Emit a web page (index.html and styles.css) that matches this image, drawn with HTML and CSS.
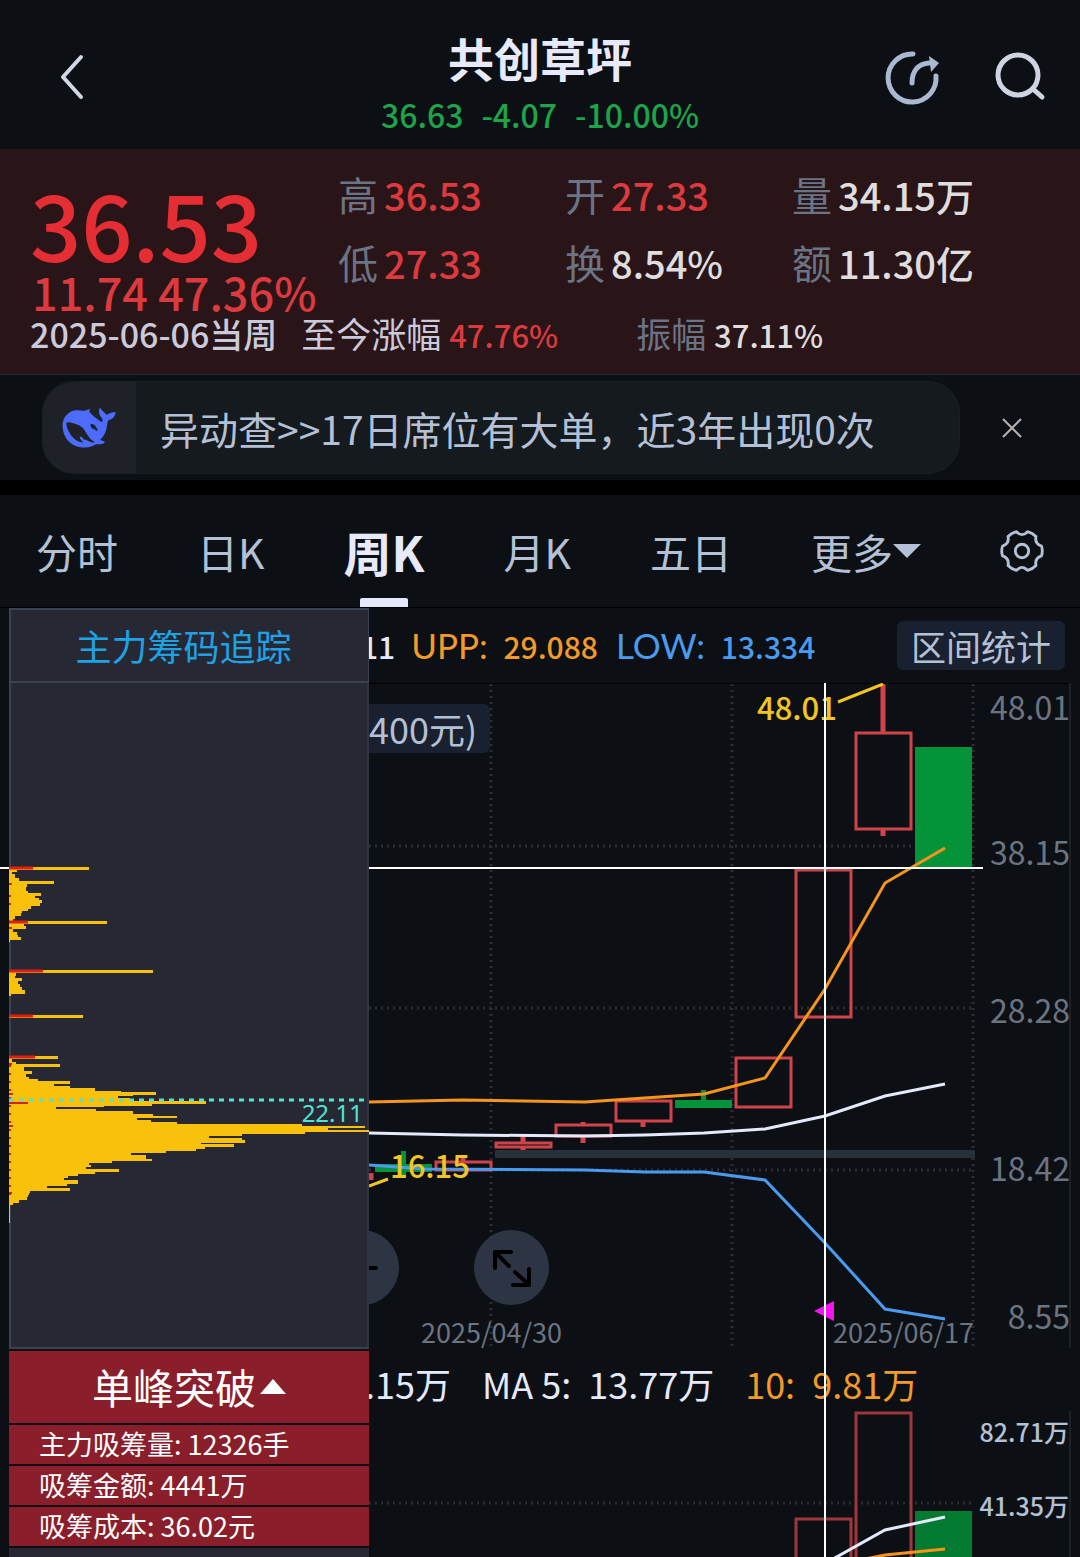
FILE: index.html
```html
<!DOCTYPE html>
<html lang="zh-CN">
<head>
    <meta charset="UTF-8">
    <meta name="viewport" content="width=device-width, initial-scale=1.0">
    <title>共创草坪 周K</title>
    <link rel="stylesheet" href="styles.css">
</head>
<body>
<header class="topbar">
    <button class="icon-btn back" aria-label="返回">
        <svg width="48" height="56" viewBox="0 0 48 56"><path d="M33 8 15 28l18 20" fill="none" stroke="#d3d6e4" stroke-width="4" stroke-linecap="round" stroke-linejoin="round"/></svg>
    </button>
    <div class="stock">
        <h1>共创草坪</h1>
        <p class="stock-change"><span>36.63</span><span>-4.07</span><span>-10.00%</span></p>
    </div>
    <div class="actions">
        <button class="icon-btn" aria-label="分享">
            <svg width="56" height="56" viewBox="0 0 56 56" fill="none" stroke="#a9b9d2" stroke-width="5" stroke-linecap="round"><path d="M29 5A24 24 0 1 0 52 27"/><path d="M28 34C28 22 34 15 45 14"/><path d="M45 7l10 7-8 9z" fill="#a9b9d2" stroke="none"/></svg>
        </button>
        <button class="icon-btn" aria-label="搜索">
            <svg width="56" height="56" viewBox="0 0 56 56" fill="none" stroke="#d0d3e2" stroke-width="5" stroke-linecap="round"><circle cx="26" cy="26" r="20"/><path d="M41 40l9 8"/></svg>
        </button>
    </div>
</header>

<section class="quote">
    <div class="quote-main">
        <div class="price-block">
            <p class="price">36.53</p>
            <p class="price-change">11.74 47.36%</p>
        </div>
        <dl class="stats">
            <div><dt>高</dt><dd class="up">36.53</dd></div>
            <div><dt>开</dt><dd class="up">27.33</dd></div>
            <div><dt>量</dt><dd>34.15万</dd></div>
            <div><dt>低</dt><dd class="up">27.33</dd></div>
            <div><dt>换</dt><dd>8.54%</dd></div>
            <div><dt>额</dt><dd>11.30亿</dd></div>
        </dl>
    </div>
    <div class="period">
        <span class="date">2025-06-06当周</span>
        <span class="since">至今涨幅 <b class="up">47.76%</b></span>
        <span class="range">振幅 <b>37.11%</b></span>
    </div>
</section>

<section class="notice">
    <a class="notice-link" href="#notice">
        <span class="notice-icon">
            <svg width="55" height="41" viewBox="70 82 165 123"><path fill="#4d6bfe" fill-rule="evenodd" d="M155 88C148 90 140 92 134 94 122 91 108 91 96 96 78 106 70 124 72 144 75 172 92 196 122 202 145 206 160 202 172 194 180 194 192 194 198 189 198 184 190 183 184 181 196 170 203 155 205 138 206 130 207 124 210 121 222 119 230 110 231 97 222 98 212 100 204 106 198 98 190 92 184 84 178 94 181 106 190 116 192 120 192 124 190 128 176 120 160 106 153 98 151 95 153 91 155 88ZM84 128C100 128 118 134 132 144 142 156 150 176 164 184L168 188C158 190 150 184 142 180 138 182 134 178 130 172 126 170 122 172 124 176 126 182 132 186 134 188 118 188 104 178 94 162 86 150 82 138 84 128ZM156 134q10-4 20 14 2 6-2 6-6-2-8-8-2 4-4 2-8-6-6-14Z"/></svg>
        </span>
        <span class="notice-text">异动查&gt;&gt;17日席位有大单，近3年出现0次</span>
    </a>
    <button class="icon-btn close" aria-label="关闭">
        <svg width="24" height="24" viewBox="0 0 24 24"><path d="M3 3l18 18M21 3 3 21" stroke="#b5b0ad" stroke-width="2"/></svg>
    </button>
</section>

<nav class="tabs">
    <button>分时</button>
    <button>日K</button>
    <button class="active">周K</button>
    <button>月K</button>
    <button>五日</button>
    <button>更多<svg width="28" height="16" viewBox="0 0 28 16"><path d="M0 1h28L14 15z" fill="#b4c0d6"/></svg></button>
    <button aria-label="设置">
        <svg width="44" height="44" viewBox="1 1 46 46" fill="none" stroke="#b4c0d6" stroke-width="3" stroke-linejoin="round"><path d="M44.4 18.9Q46 24 44.4 29.1 37 31.5 38.6 39.1 35 43 29.8 44.2 24 38 18.2 44.2 13 43 9.4 39.1 11 31.5 3.6 29.1 2 24 3.6 18.9 11 16.5 9.4 8.9 13 5 18.2 3.8 24 10 29.8 3.8 35 5 38.6 8.9 37 16.5 44.4 18.9Z"/><circle cx="24" cy="24" r="7"/></svg>
    </button>
</nav>

<main class="board">
    <aside class="chips">
        <h2>主力筹码追踪</h2>
        <svg class="chips-plot" viewBox="9 683 360 666">
            <path d="M10 683V1348H369" fill="none" stroke="#3a4150" stroke-width="2"/>
            <path d="M368 683V1348" stroke="#3a4150"/>
            <path d="M0 868H9" stroke="#fff" stroke-width="2"/>
            <!-- yellow: holdings by price -->
            <g fill="#f9c20a">
                <path d="M9 867H89V870H17V872H12V874H15V878H19V881H54V884H27V887H26V891H28V893H41V896H35V898H39V900H42V903H40V906H31V909H28V911H22V913H21V916H15V919H13V921H107V924H24V926H26V929H13V932H17V935H18V937H21V940H10V942H9Z"/>
                <path d="M9 970H153V973H16V976H15V978H22V981H18V984H20V987H22V990H25V994H11V996H9Z"/>
                <path d="M9 1015H83V1018H9Z"/>
                <path d="M9 1056H58V1059H12V1062H16V1064H60V1067H24V1071H32V1074H26V1077H29V1079H38V1081H70V1084H54V1086H70V1088H95V1091H121V1092H156V1095H133V1096H118V1098H130V1101H206V1104H152V1106H104V1107H56V1109H96V1111H133V1114H153V1116H177V1118H137V1120H151V1122H177V1124H302V1126H365V1128H328V1130H369V1132H305V1134H242V1136H209V1138H242V1140H245V1143H201V1144H234V1147H205V1149H196V1151H166V1153H131V1155H146V1159H152V1161H112V1163H89V1165H91V1167H86V1169H119V1172H95V1174H78V1176H68V1178H64V1180H78V1184H67V1186H47V1188H70V1191H30V1193H29V1195H28V1197H27V1200H19V1203H13V1205H10V1223H9Z"/>
            </g>
            <g stroke="#e01e12" stroke-width="3">
                <path d="M9 868H33M9 922H28M9 971H43M9 1016H33M9 1057H35"/>
                <path d="M9 1103H28M9 1064H12M9 1094H13M9 1126H13M9 1193H12M9 884H12M9 928H12" stroke-width="2"/>
                <path d="M10 895V910M10 1065V1200" stroke-width="2" stroke-dasharray="2 6"/>
            </g>
            <path d="M9 1100H369" stroke="#4fe3d4" stroke-width="3" stroke-dasharray="5 5"/>
            <text class="avg-cost" x="363" y="1122">22.11</text>
        </svg>
        <button class="signal">单峰突破<svg width="26" height="15" viewBox="0 0 26 15"><path d="M0 15 13 0l13 15z" fill="#fff"/></svg></button>
        <p>主力吸筹量: 12326手</p>
        <p>吸筹金额: 4441万</p>
        <p>吸筹成本: 36.02元</p>
        <div class="chips-next"><i></i></div>
    </aside>

    <section class="chart">
        <div class="indicators">
            <span class="mid">11</span>
            <span class="upp"><i>UPP:</i> 29.088</span>
            <span class="low"><i>LOW:</i> 13.334</span>
            <button class="interval">区间统计</button>
        </div>

        <div class="price-chart">
            <svg viewBox="369 683 711 667">
                <path d="M369 683H1070" stroke="#000" stroke-width="2"/>
                <path d="M1070 683V1348" stroke="#1c2127" stroke-width="2"/>
                <path class="grid" d="M491 684V1348M732 684V1348M973 684V1348M369 846H973M369 1008H973M369 1170H973"/>
                <path d="M495 1154H975" stroke="#28303a" stroke-width="8"/>
                <g class="rise">
                    <rect x="436" y="1162" width="55" height="8"/>
                    <rect x="496" y="1143" width="55" height="4"/>
                    <rect x="556" y="1125" width="55" height="11"/>
                    <rect x="616" y="1101" width="55" height="20"/>
                    <rect x="736" y="1058" width="55" height="49"/>
                    <rect x="796" y="870" width="55" height="147"/>
                    <rect x="856" y="733" width="55" height="96"/>
                    <path class="wick" d="M371 1173V1180M463 1158V1162M523 1136V1142M523 1148V1150M583 1122V1125M583 1137V1143M643 1122V1127M883 684V732M883 830V836"/>
                </g>
                <g class="fall">
                    <path d="M375 1164h57v8h-57zM401 1151h5v26h-5zM675 1100h57v8h-57zM701 1090h5v12h-5zM915 747h57v121h-57z"/>
                </g>
                <g class="lines">
                    <polyline stroke="#f7941d" points="369,1102 463,1100 585,1102 704,1094 765,1078 825,989 885,883 945,848"/>
                    <polyline stroke="#e6e9fb" points="369,1133 463,1135 585,1136 645,1135 704,1133 765,1129 825,1116 885,1096 945,1084"/>
                    <polyline stroke="#4a9bf0" points="369,1165 425,1169 585,1170 645,1172 704,1172 765,1180 825,1243 885,1309 945,1319"/>
                    <path stroke="#f3c522" d="M838 702 883 684M369 1186 388 1179"/>
                </g>
                <g class="peak">
                    <text x="757" y="720">48.01</text>
                    <text x="390" y="1178">16.15</text>
                </g>
                <g class="axis">
                    <text x="1070" y="720">48.01</text>
                    <text x="1070" y="865">38.15</text>
                    <text x="1070" y="1023">28.28</text>
                    <text x="1070" y="1181">18.42</text>
                    <text x="1070" y="1329">8.55</text>
                </g>
                <g class="dates">
                    <text x="421" y="1343">2025/04/30</text>
                    <text x="833" y="1343">2025/06/17</text>
                </g>
                <path d="M814 1311 834 1301v20z" fill="#f814f0"/>
                <path d="M369 868H983" stroke="#fff" stroke-width="2"/>
            </svg>
            <button class="lot">400元)</button>
            <div class="zoom-tools">
                <button aria-label="缩小"><svg width="40" height="40" viewBox="0 0 40 40"><path d="M6 20h28" stroke="#000" stroke-width="4" stroke-linecap="round"/></svg></button>
                <button aria-label="全屏"><svg width="40" height="40" viewBox="0 0 40 40" fill="none" stroke="#000" stroke-width="4" stroke-linecap="round" stroke-linejoin="round"><path d="M3 20V4h16M4 5l13 13M37 21v16H21M36 36 23 24"/></svg></button>
            </div>
        </div>

        <p class="volume-legend">
            <span>.15万</span>
            <span><i>MA 5:</i> 13.77万</span>
            <span class="ma10"><i>10:</i> 9.81万</span>
        </p>

        <svg class="volume-chart" viewBox="369 1410 711 147">
            <path d="M1070 1411V1557" stroke="#1c2127" stroke-width="2"/>
            <path class="grid" d="M369 1503H973"/>
            <g class="rise volume">
                <rect x="796" y="1519" width="55" height="60"/>
                <rect x="856" y="1413" width="55" height="160"/>
            </g>
            <rect x="915" y="1511" width="57" height="46" fill="#027a30"/>
            <g class="lines">
                <polyline stroke="#e6e9fb" points="833,1559 885,1530 945,1517"/>
                <polyline stroke="#f7941d" points="865,1559 885,1555 945,1549"/>
            </g>
            <g class="volume-axis">
                <text x="1069" y="1442">82.71万</text>
                <text x="1069" y="1516">41.35万</text>
            </g>
        </svg>
        <div class="crosshair"></div>
    </section>
</main>
</body>
</html>
```
FILE: styles.css
```css
* {
    box-sizing: border-box;
}
body {
    font-family: "Noto Sans CJK SC", "Noto Sans", sans-serif;
    margin: 0;
    background-color: #0c1014;
    color: #b4c0d6;
}
h1, h2, p, dl, dd {
    margin: 0;
}
button {
    font: inherit;
    color: inherit;
    background: none;
    border: none;
    padding: 0;
    cursor: pointer;
}
svg {
    display: block;
}
i {
    font-style: normal;
}
b {
    font-weight: 500;
}
.up {
    color: #dc3a3e;
}

/* Top bar */
.topbar {
    display: grid;
    grid-template-columns: 1fr auto 1fr;
    align-items: center;
    height: 149px;
    padding: 4px 32px 0 48px;
}
.stock {
    padding-top: 18px;
    text-align: center;
    margin-right: 16px;
}
.stock h1 {
    font-size: 46px;
    line-height: 56px;
    color: #e8eafc;
}
.stock-change {
    display: flex;
    justify-content: center;
    gap: 18px;
    font-size: 32px;
    font-weight: 500;
    line-height: 58px;
    color: #1fa348;
}
.actions {
    display: flex;
    justify-content: flex-end;
    gap: 52px;
}

/* Quote */
.quote {
    padding: 11px 61px 21px 30px;
    background-color: #291518;
    border-bottom: 1px solid #23282e;
}
.quote-main {
    display: flex;
    height: 155px;
}
.price-block {
    width: 308px;
    padding-top: 17px;
    color: #e52d34;
    white-space: nowrap;
}
.price {
    font-size: 90px;
    font-weight: 500;
    line-height: 92px;
}
.price-change {
    padding-left: 2px;
    font-size: 45px;
    font-weight: 500;
    line-height: 46px;
    color: #dc3a3e;
}
.stats {
    flex: 1;
    display: grid;
    grid-template-columns: repeat(3, 1fr);
    grid-auto-rows: 68px;
}
.stats div {
    display: flex;
    align-items: center;
    gap: 6px;
    white-space: nowrap;
}
.stats dt {
    font-size: 40px;
    color: #6b7484;
}
.stats dd {
    font-size: 38px;
    font-weight: 500;
}
.stats dd:not(.up), .range b {
    color: #dfdddd;
}
.period {
    display: flex;
    align-items: center;
    font-size: 35px;
    line-height: 36px;
    white-space: nowrap;
    color: #cbcadb;
}
.period b {
    font-size: 31px;
}
.date {
    font-size: 34px;
    font-weight: 500;
}
.since {
    margin-left: 24px;
}
.range {
    margin-left: 78px;
    color: #6b7484;
}

/* Notice */
.notice {
    display: flex;
    align-items: center;
    height: 120px;
    padding: 6px 56px 6px 42px;
    border-bottom: 15px solid #000;
}
.notice-link {
    flex: 1;
    display: flex;
    align-items: center;
    height: 93px;
    margin-right: 40px;
    border: 1px solid #1a1f24;
    border-radius: 32px;
    overflow: hidden;
    background-color: #151a1e;
    color: #b4c0d6;
    text-decoration: none;
}
.notice-icon {
    display: flex;
    align-items: center;
    justify-content: center;
    width: 93px;
    height: 100%;
    background-color: #1e2228;
}
.notice-text {
    padding-left: 24px;
    font-size: 39px;
    white-space: nowrap;
}

/* Tabs */
.tabs {
    display: flex;
    justify-content: space-between;
    height: 113px;
    padding: 0 36px;
    border-bottom: 1px solid #000;
    font-size: 41px;
}
.tabs button {
    display: flex;
    align-items: center;
    position: relative;
}
.tabs .active {
    font-size: 48px;
    font-weight: 700;
    color: #e8eafc;
}
.tabs .active::after {
    content: "";
    position: absolute;
    bottom: 0;
    left: 50%;
    width: 48px;
    height: 9px;
    margin-left: -24px;
    border-radius: 2px 2px 0 0;
    background-color: #e4e7fa;
}

/* Chip panel */
.board {
    display: grid;
    grid-template-columns: 369px 1fr;
}
.chips {
    display: flex;
    flex-direction: column;
    gap: 2px;
    padding-left: 9px;
}
.chips h2 {
    height: 75px;
    margin-bottom: -2px;
    border: 2px solid #3a4150;
    border-right-width: 1px;
    background-color: #262833;
    font-size: 36px;
    font-weight: 400;
    line-height: 70px;
    text-align: center;
    text-indent: -12px;
    color: #1fa2e4;
}
.chips-plot {
    overflow: visible;
    background-color: #262833;
}
.avg-cost {
    font-family: "Noto Sans", sans-serif;
    font-size: 24px;
    text-anchor: end;
    fill: #4fe3d4;
}
.signal {
    display: flex;
    align-items: center;
    justify-content: center;
    gap: 4px;
    height: 72px;
    padding-bottom: 2px;
    background-color: #8a1f2b;
    color: #fff;
    font-size: 41px;
}
.chips p {
    padding: 0 0 2px 30px;
    background-color: #8a1f2b;
    color: #fff;
    font-size: 27px;
    line-height: 37px;
}
.chips-next {
    height: 10px;
    background-color: #262833;
    display: flex;
    align-items: flex-end;
    padding-left: 99px;
}
.chips-next i {
    width: 21px;
    height: 1px;
    background-color: #2fd6d0;
}

/* Chart */
.chart {
    position: relative;
    min-width: 0;
    overflow: hidden;
}
.chart svg {
    width: 100%;
}
.indicators {
    display: flex;
    align-items: center;
    height: 75px;
    padding-right: 15px;
    font-size: 30px;
    font-weight: 500;
    white-space: nowrap;
}
.indicators i {
    font-family: Lato, sans-serif;
    font-size: 35px;
    font-weight: 400;
    margin-right: 9px;
}
.mid {
    margin: 0 16px 0 -8px;
    color: #e6e9fb;
}
.upp {
    margin-right: 18px;
    color: #f39a28;
}
.low {
    color: #4a9bf0;
}
.interval, .lot {
    height: 49px;
    border-radius: 6px;
    background-color: #192030;
    color: #b4c0d6;
    font-weight: 400;
    line-height: 47px;
}
.interval {
    margin-left: auto;
    padding: 0 14px;
    font-size: 35px;
}
.price-chart {
    position: relative;
}
.lot {
    position: absolute;
    top: 21px;
    left: 0;
    padding-right: 13px;
    border-radius: 0 6px 6px 0;
    font-size: 36px;
}
.zoom-tools {
    position: absolute;
    bottom: 45px;
    left: -45px;
    display: flex;
    gap: 75px;
}
.zoom-tools button {
    display: flex;
    align-items: center;
    justify-content: center;
    width: 75px;
    height: 75px;
    border-radius: 50%;
    background-color: #2d3545;
}
.zoom-tools svg {
    width: 40px;
}
.grid {
    fill: none;
    stroke: #2a2e34;
    stroke-width: 3;
    stroke-dasharray: 2 4;
}
.rise {
    fill: none;
    stroke: #cf444a;
    stroke-width: 3;
}
.rise .wick {
    stroke-width: 5;
}
.rise.volume {
    stroke: #9f363d;
}
.fall {
    fill: #049338;
}
.lines {
    fill: none;
    stroke-width: 3;
}
.peak {
    font-size: 31px;
    font-weight: 500;
    fill: #f3c522;
}
.axis {
    font-size: 32px;
    text-anchor: end;
    fill: #6c7482;
}
.dates {
    font-size: 27px;
    fill: #6c7482;
}
.volume-axis {
    font-size: 25px;
    font-weight: 500;
    text-anchor: end;
    fill: #b4c0d6;
}
.volume-legend {
    display: flex;
    gap: 31px;
    height: 60px;
    margin-left: -4px;
    font-size: 36px;
    line-height: 66px;
    white-space: nowrap;
    color: #e6e9fb;
}
.volume-legend i {
    margin-right: 9px;
}
.ma10 {
    color: #f39a28;
}
.crosshair {
    position: absolute;
    top: 75px;
    bottom: 0;
    left: 64%;
    width: 2px;
    background-color: #fff;
}
```
